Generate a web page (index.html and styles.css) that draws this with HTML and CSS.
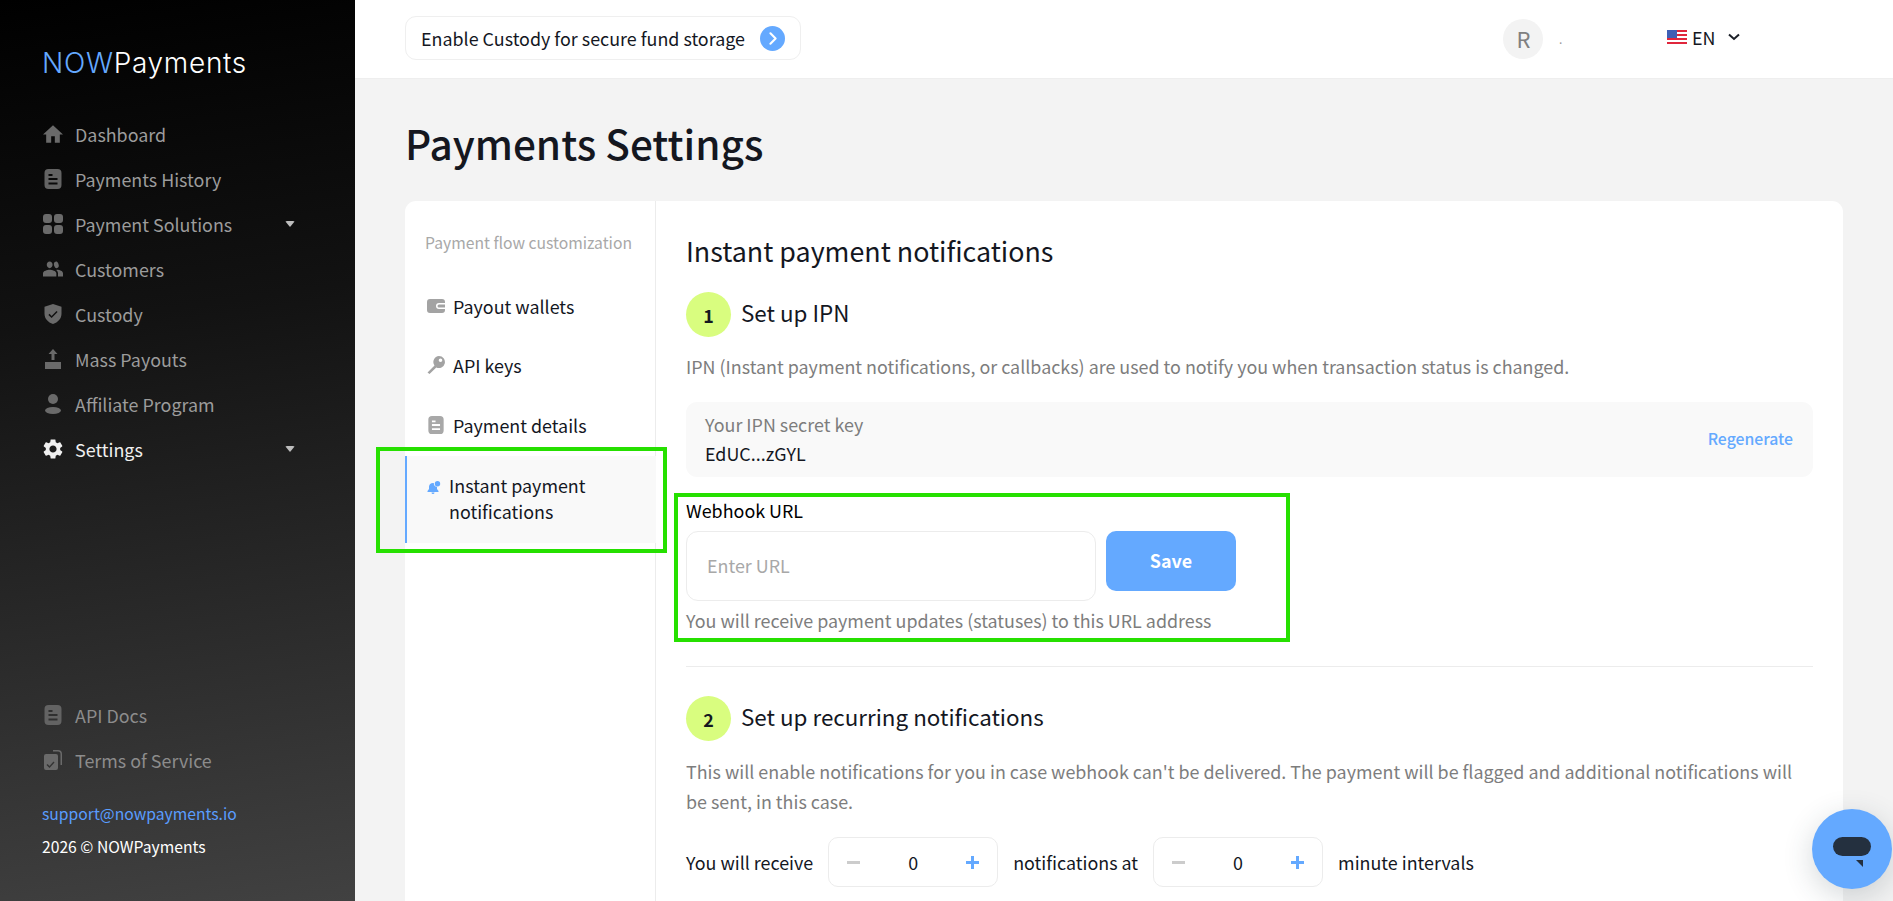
FILE: index.html
```html
<!DOCTYPE html>
<html lang="en">
<head>
    <meta charset="UTF-8">
    <title>Payments Settings</title>
    <link rel="stylesheet" href="styles.css">
</head>
<body>

<svg class="icon-defs" width="0" height="0">
    <symbol id="i-doc" viewBox="0 0 20 20"><path fill-rule="evenodd" d="M5.500 0h9a4 4 0 0 1 4 4v12a4 4 0 0 1-4 4h-9a4 4 0 0 1-4-4V4a4 4 0 0 1 4-4zM5.500 5v2h4V5zm0 4v2h9V9zm0 4.500v2h9v-2z"/></symbol>
</svg>

<!-- Sidebar -->
<aside class="sidebar">
    <div class="logo"><span class="logo-now">NOW</span>Payments</div>

    <nav class="nav">
        <a class="nav-item">
            <svg class="nav-icon" viewBox="1 2 22 19"><path d="M10 21v-7h4v7h5.500v-9H23L12 2 1 12h3.500v9z"/></svg>
            Dashboard
        </a>
        <a class="nav-item">
            <svg class="nav-icon doc-icon"><use href="#i-doc"/></svg>
            Payments History
        </a>
        <a class="nav-item">
            <svg class="nav-icon" viewBox="0 0 20 20"><rect x="0" y="0" width="9" height="9" rx="3"/><rect x="11" y="0" width="9" height="9" rx="3"/><rect x="0" y="11" width="9" height="9" rx="3"/><rect x="11" y="11" width="9" height="9" rx="3"/></svg>
            Payment Solutions
            <span class="caret"></span>
        </a>
        <a class="nav-item">
            <svg class="nav-icon" viewBox="0 3 24 18"><path d="M16 11c1.660 0 2.990-1.340 2.990-3S17.660 3 16 3c-1.660 0-3 1.340-3 3s1.340 5 3 5zm-8 0c2 0 3.500-1.800 3.500-4S10 3 8 3 4.500 4.800 4.500 7 6 11 8 11zm0 2c-2.800 0-8 1.400-8 4.200V21h16v-3.800C16 14.400 10.800 13 8 13zm9 0c-.3 0-.700.020-1.100.050 1.300 1 2.100 2.400 2.100 4.150V21h6v-3.800c0-2.800-4.200-4.200-7-4.200z"/></svg>
            Customers
        </a>
        <a class="nav-item">
            <svg class="nav-icon" viewBox="0 0 20 20"><path fill-rule="evenodd" d="M10 0l8.500 2.800v7c0 4.800-3.500 8.700-8.500 10.200C5 18.500 1.500 14.600 1.500 9.800v-7zM6.500 9.800l-1.100 1.100 3.200 3.200 6-6L13.500 7l-4.900 4.900z"/></svg>
            Custody
        </a>
        <a class="nav-item">
            <svg class="nav-icon" viewBox="0 0 20 20"><path d="M10 0l4.500 5H11.500v6h-3V5H5.500zM2 13h16v7H2z"/></svg>
            Mass Payouts
        </a>
        <a class="nav-item">
            <svg class="nav-icon" viewBox="0 0 20 20"><circle cx="10" cy="5" r="5"/><ellipse cx="10" cy="16.500" rx="8" ry="3.500"/></svg>
            Affiliate Program
        </a>
        <a class="nav-item nav-item-active">
            <svg class="nav-icon" viewBox="2 2 20 20"><path d="M19.140 12.940c.04-.3.060-.61.060-.94 0-.32-.02-.64-.07-.94l2.030-1.580c.18-.14.230-.41.120-.61l-1.920-3.320c-.12-.22-.37-.29-.59-.22l-2.390.96c-.5-.38-1.030-.7-1.620-.94l-.36-2.540c-.04-.24-.24-.41-.48-.41h-3.840c-.24 0-.43.170-.47.410l-.36 2.540c-.59.240-1.130.570-1.620.940l-2.390-.96c-.22-.08-.47 0-.59.220L2.740 8.870c-.12.210-.08.470.120.610l2.030 1.580c-.05.3-.09.630-.09.940s.020.640.070.940l-2.030 1.580c-.18.140-.23.410-.12.610l1.920 3.320c.12.220.370.290.590.220l2.390-.96c.5.380 1.030.7 1.620.94l.36 2.540c.050.240.240.410.480.410h3.840c.240 0 .440-.17.470-.41l.36-2.540c.590-.24 1.130-.56 1.620-.94l2.390.96c.220.080.470 0 .590-.22l1.920-3.320c.120-.22.070-.47-.12-.61l-2.010-1.580zM12 15.600c-1.980 0-3.600-1.620-3.600-3.600s1.620-3.600 3.600-3.600 3.600 1.620 3.600 3.600-1.620 3.600-3.600 3.600z"/></svg>
            Settings
            <span class="caret"></span>
        </a>
    </nav>

    <div class="sidebar-bottom">
        <a class="nav-item nav-item-dim">
            <svg class="nav-icon doc-icon"><use href="#i-doc"/></svg>
            API Docs
        </a>
        <a class="nav-item nav-item-dim">
            <svg class="nav-icon" viewBox="0 0 20 20"><path d="M10 0h5a4 4 0 0 1 4 4v11h-1.500V4A2.500 2.500 0 0 0 15 1.500h-5z"/><path fill-rule="evenodd" d="M3 4h10a2 2 0 0 1 2 2v12a2 2 0 0 1-2 2H3a2 2 0 0 1-2-2V6a2 2 0 0 1 2-2zm1.500 10l-1 1 3 3 5-5.500-1-1-4 4.500z"/></svg>
            Terms of Service
        </a>
        <a class="support">support@nowpayments.io</a>
        <div class="copyright">2026 © NOWPayments</div>
    </div>
</aside>

<div class="main">
    <!-- Top bar -->
    <header class="topbar">
        <div class="custody-banner">
            Enable Custody for secure fund storage
            <span class="banner-go">
                <svg viewBox="0 0 24 24" width="25" height="25"><path d="M10 7l5 5-5 5" fill="none" stroke="#fff" stroke-width="2" stroke-linecap="round" stroke-linejoin="round"/></svg>
            </span>
        </div>
        <div class="account">
            <span class="avatar">R</span>
            <span class="account-name">.</span>
        </div>
        <div class="lang">
            <svg class="flag" viewBox="0 0 20 14">
                <rect width="20" height="14" fill="#fff"/>
                <path d="M0 1h20M0 5h20M0 9h20M0 13h20" stroke="#e0263c" stroke-width="2"/>
                <rect width="10" height="8" fill="#3f5fb5"/>
            </svg>
            EN
            <svg class="lang-chevron" viewBox="0 0 12 8"><path d="M1 1.500l5 4.500 5-4.500" fill="none" stroke="#1b1f27" stroke-width="2"/></svg>
        </div>
    </header>

    <main class="content">
        <h1 class="page-title">Payments Settings</h1>

        <div class="card">
            <!-- Settings menu -->
            <div class="settings-menu">
                <div class="menu-title">Payment flow customization</div>
                <a class="menu-item">
                    <svg class="menu-icon" viewBox="0 0 18 14"><path fill-rule="evenodd" d="M3 0h12a3 3 0 0 1 3 3v1h-6a3 3 0 0 0 0 6h6v1a3 3 0 0 1-3 3H3a3 3 0 0 1-3-3V3a3 3 0 0 1 3-3zm9 5.500h6v3h-6a1.500 1.500 0 0 1 0-3z"/></svg>
                    Payout wallets
                </a>
                <a class="menu-item">
                    <svg class="menu-icon" viewBox="0 0 18 18"><path fill-rule="evenodd" d="M12 0a6 6 0 1 1-2.700 11.400L2.500 18 .5 16.500l7-7A6 6 0 0 1 12 0zm1.500 2.500a1.800 1.800 0 1 0 0 3.600 1.800 1.800 0 0 0 0-3.600z"/></svg>
                    API keys
                </a>
                <a class="menu-item">
                    <svg class="menu-icon doc-icon-small"><use href="#i-doc"/></svg>
                    Payment details
                </a>
                <a class="menu-item menu-item-active">
                    <svg class="menu-icon bell-icon" viewBox="0 0 14 13"><path d="M6 2c.3 0 .6.050.9.150a3 3 0 0 0 3.100 3.600V8l1.500 2v1H.5v-1L2 8V5.500A4 4 0 0 1 6 2zM4.500 11.500h3a1.500 1.500 0 0 1-3 0z"/><circle cx="10.500" cy="2.700" r="2.700"/></svg>
                    <span>Instant payment notifications</span>
                </a>
            </div>

            <!-- Settings body -->
            <div class="settings-body">
                <h2 class="body-title">Instant payment notifications</h2>

                <div class="step-head">
                    <span class="step-num">1</span>
                    <h3 class="step-title">Set up IPN</h3>
                </div>
                <p class="step-desc">IPN (Instant payment notifications, or callbacks) are used to notify you when transaction status is changed.</p>

                <div class="key-box">
                    <div>
                        <div class="key-label">Your IPN secret key</div>
                        <div class="key-value">EdUC...zGYL</div>
                    </div>
                    <a class="regenerate">Regenerate</a>
                </div>

                <div class="webhook">
                    <label class="webhook-label">Webhook URL</label>
                    <div class="webhook-row">
                        <input class="webhook-input" type="text" placeholder="Enter URL">
                        <button class="save-btn" type="button">Save</button>
                    </div>
                    <p class="webhook-hint">You will receive payment updates (statuses) to this URL address</p>
                </div>

                <hr class="divider">

                <div class="step-head">
                    <span class="step-num">2</span>
                    <h3 class="step-title">Set up recurring notifications</h3>
                </div>
                <p class="step-desc step-desc-long">This will enable notifications for you in case webhook can't be delivered. The payment will be flagged and additional notifications will be sent, in this case.</p>

                <div class="recurring">
                    You will receive
                    <div class="stepper"><span class="stepper-minus"></span><span>0</span><span class="stepper-plus"></span></div>
                    notifications at
                    <div class="stepper"><span class="stepper-minus"></span><span>0</span><span class="stepper-plus"></span></div>
                    minute intervals
                </div>
            </div>
        </div>
    </main>
</div>

<!-- Green highlight boxes drawn over the shot -->
<div class="highlight highlight-menu"></div>
<div class="highlight highlight-webhook"></div>

<!-- Chat widget -->
<div class="chat-btn">
    <span class="chat-pill"></span>
    <span class="chat-tail"></span>
</div>

</body>
</html>
```

FILE: styles.css
```css
* {
    box-sizing: border-box;
}

html, body {
    height: 100%;
}

body {
    margin: 0;
    display: flex;
    overflow: hidden;
    font-family: "Noto Sans CJK JP", "Noto Sans", sans-serif;
    font-size: 17.9px;
    line-height: 26px;
    color: #14171f;
    background-color: #f3f3f3;
}

.icon-defs {
    position: absolute;
}

/* Sidebar */
.sidebar {
    width: 355px;
    flex-shrink: 0;
    display: flex;
    flex-direction: column;
    padding: 43px 0 0 42px;
    background: linear-gradient(172deg, #000 0%, #121212 35%, #414141 100%);
}

.logo {
    font-family: "Inter", sans-serif;
    font-size: 28px;
    font-weight: 300;
    line-height: 40px;
    letter-spacing: 0.7px;
    color: #fff;
}

.logo-now {
    color: #64a9ff;
}

.nav {
    margin-top: 28px;
}

.nav-item {
    display: flex;
    align-items: center;
    height: 45px;
    padding-right: 60px;
    color: #9c9c9c;
}

.nav-item-active {
    color: #f0f0f0;
}

.nav-item-dim {
    color: #8c8c8c;
}

.nav-icon {
    width: 20px;
    height: 20px;
    flex-shrink: 0;
    margin: 0 12px 0 1px;
    fill: #6a6a6a;
}

.nav-item-active .nav-icon {
    fill: #f0f0f0;
}

.doc-icon {
    fill: #636363;
}

.caret {
    margin-left: auto;
    border-left: 5.5px solid transparent;
    border-right: 5.5px solid transparent;
    border-top: 6px solid #bdbdbd;
    border-radius: 2px;
}

.sidebar-bottom {
    margin-top: auto;
    padding-bottom: 41px;
}

.support {
    display: block;
    margin-top: 19px;
    font-size: 15.7px;
    color: #5a9dff;
}

.copyright {
    margin-top: 7px;
    font-size: 15.7px;
    color: #fff;
}

/* Top bar */
.main {
    flex: 1;
    min-width: 0;
    display: flex;
    flex-direction: column;
}

.topbar {
    height: 79px;
    flex-shrink: 0;
    display: flex;
    align-items: center;
    padding: 0 0 0 50px;
    background-color: #fff;
    border-bottom: 1px solid #eee;
}

.custody-banner {
    display: flex;
    align-items: center;
    justify-content: space-between;
    width: 396px;
    height: 44px;
    padding: 0 15px;
    margin-top: -2px;
    border: 1px solid #efefef;
    border-radius: 11px;
}

.banner-go {
    width: 25px;
    height: 25px;
    border-radius: 50%;
    background-color: #64a9ff;
}

.banner-go svg {
    display: block;
}

.account {
    display: flex;
    align-items: center;
    margin-left: 702px;
    width: 164px;
}

.avatar {
    width: 40px;
    height: 40px;
    display: flex;
    align-items: center;
    justify-content: center;
    padding: 0 0 2px 1px;
    border-radius: 50%;
    background-color: #f3f3f3;
    font-size: 22px;
    color: #808080;
}

.account-name {
    margin-left: 16px;
    font-size: 12px;
    color: #999;
}

.lang {
    display: flex;
    align-items: center;
    margin-top: -4px;
}

.flag {
    width: 20px;
    height: 14px;
    margin-right: 5px;
}

.lang-chevron {
    width: 12px;
    height: 8px;
    margin-left: 13px;
}

/* Page content */
.content {
    flex: 1;
    min-height: 0;
    display: flex;
    flex-direction: column;
    padding: 0 50px;
}

.page-title {
    margin: 0;
    padding-top: 36px;
    font-size: 40.5px;
    font-weight: 500;
    line-height: 56px;
}

.card {
    flex: 1;
    display: flex;
    margin-top: 30px;
    background-color: #fff;
    border-radius: 11px 11px 0 0;
}

/* Settings menu */
.settings-menu {
    width: 251px;
    flex-shrink: 0;
    padding-top: 29px;
    border-right: 1px solid #ececec;
}

.menu-title {
    padding-left: 20px;
    font-size: 15.7px;
    color: #a8a8a8;
}

.menu-item {
    display: flex;
    align-items: center;
    height: 59.5px;
    padding-left: 22px;
}

.menu-title + .menu-item {
    margin-top: 20px;
}

.menu-icon {
    width: 18px;
    height: 18px;
    flex-shrink: 0;
    margin-right: 8px;
    fill: #a3a3a3;
}

.doc-icon-small {
    fill: #a8a8a8;
}

.menu-item-active {
    height: 87px;
    margin-top: 1.500px;
    padding: 0 0 3px 20px;
    margin-right: -1px;
    background-color: #f9f9f9;
    border-left: 2px solid #64a9ff;
}

.bell-icon {
    width: 14px;
    height: 13px;
    margin: 0 8px 22px 0;
    fill: #64a9ff;
}

/* Settings body */
.settings-body {
    flex: 1;
    min-width: 0;
    padding: 30px 30px 0;
}

.body-title {
    margin: 0;
    font-size: 26.85px;
    font-weight: 400;
    line-height: 40px;
}

.step-head {
    display: flex;
    align-items: center;
    margin-top: 21px;
}

.step-num {
    width: 45px;
    height: 45px;
    display: flex;
    align-items: center;
    justify-content: center;
    margin-right: 10px;
    border-radius: 50%;
    background-color: #d9fd7f;
    font-weight: 700;
}

.step-title {
    margin: 0;
    padding-bottom: 6px;
    font-size: 22.4px;
    font-weight: 400;
}

.step-desc {
    margin: 16px 0 0;
    color: #7d7d7d;
}

.step-desc-long {
    margin-top: 15px;
    line-height: 30px;
}

.key-box {
    display: flex;
    align-items: center;
    justify-content: space-between;
    height: 75px;
    margin-top: 23px;
    padding: 0 20px 2px 19px;
    background-color: #f9f9f9;
    border-radius: 11px;
}

.key-label {
    color: #7d7d7d;
}

.key-value {
    margin-top: 3px;
}

.regenerate {
    font-size: 15.8px;
    font-weight: 500;
    color: #64a9ff;
}

.webhook {
    padding-top: 20px;
}

.webhook-label {
    display: block;
    color: #000;
}

.webhook-row {
    display: flex;
    align-items: flex-start;
    gap: 10px;
    margin-top: 8px;
}

.webhook-input {
    width: 410px;
    height: 70px;
    padding: 0 20px 2px;
    border: 1px solid #ececec;
    border-radius: 12px;
    outline: none;
    font-family: inherit;
    font-size: 17.9px;
}

.webhook-input::placeholder {
    color: #a8a8a8;
}

.save-btn {
    width: 130px;
    height: 60px;
    padding-bottom: 4px;
    border: none;
    border-radius: 10px;
    background-color: #64a9ff;
    color: #fff;
    font-family: inherit;
    font-size: 17.9px;
    font-weight: 700;
}

.webhook-hint {
    margin: 6px 0 0;
    color: #7d7d7d;
}

.divider {
    height: 1px;
    margin: 33px 0 0;
    border: none;
    background-color: #ececec;
}

.divider + .step-head {
    margin-top: 29px;
}

.recurring {
    display: flex;
    align-items: center;
    gap: 15px;
    margin-top: 21px;
}

.stepper {
    width: 170px;
    height: 50px;
    display: flex;
    align-items: center;
    justify-content: space-between;
    padding: 0 18px;
    border: 1px solid #ececec;
    border-radius: 10px;
}

.stepper-minus,
.stepper-plus {
    position: relative;
    width: 13px;
    height: 3px;
    background-color: #ccc;
}

.stepper-plus {
    background-color: #64a9ff;
}

.stepper-plus::after {
    content: "";
    position: absolute;
    left: 5px;
    top: -5px;
    width: 3px;
    height: 13px;
    background-color: #64a9ff;
}

/* Green highlight boxes */
.highlight {
    position: absolute;
    border: 4px solid #26e000;
}

.highlight-menu {
    left: 376px;
    top: 447px;
    width: 291px;
    height: 106px;
}

.highlight-webhook {
    left: 674px;
    top: 493px;
    width: 616px;
    height: 149px;
}

/* Chat widget */
.chat-btn {
    position: absolute;
    left: 1812px;
    top: 809px;
    width: 80px;
    height: 80px;
    border-radius: 50%;
    background-color: #64a9ff;
    box-shadow: 0 8px 30px rgba(40, 60, 70, 0.2);
}

.chat-pill {
    position: absolute;
    left: 21px;
    top: 28px;
    width: 38px;
    height: 19px;
    border-radius: 10px;
    background-color: #24303f;
}

.chat-tail {
    position: absolute;
    left: 44px;
    top: 51px;
    width: 0;
    height: 0;
    border-top: 7px solid #24303f;
    border-left: 7px solid transparent;
}
```
